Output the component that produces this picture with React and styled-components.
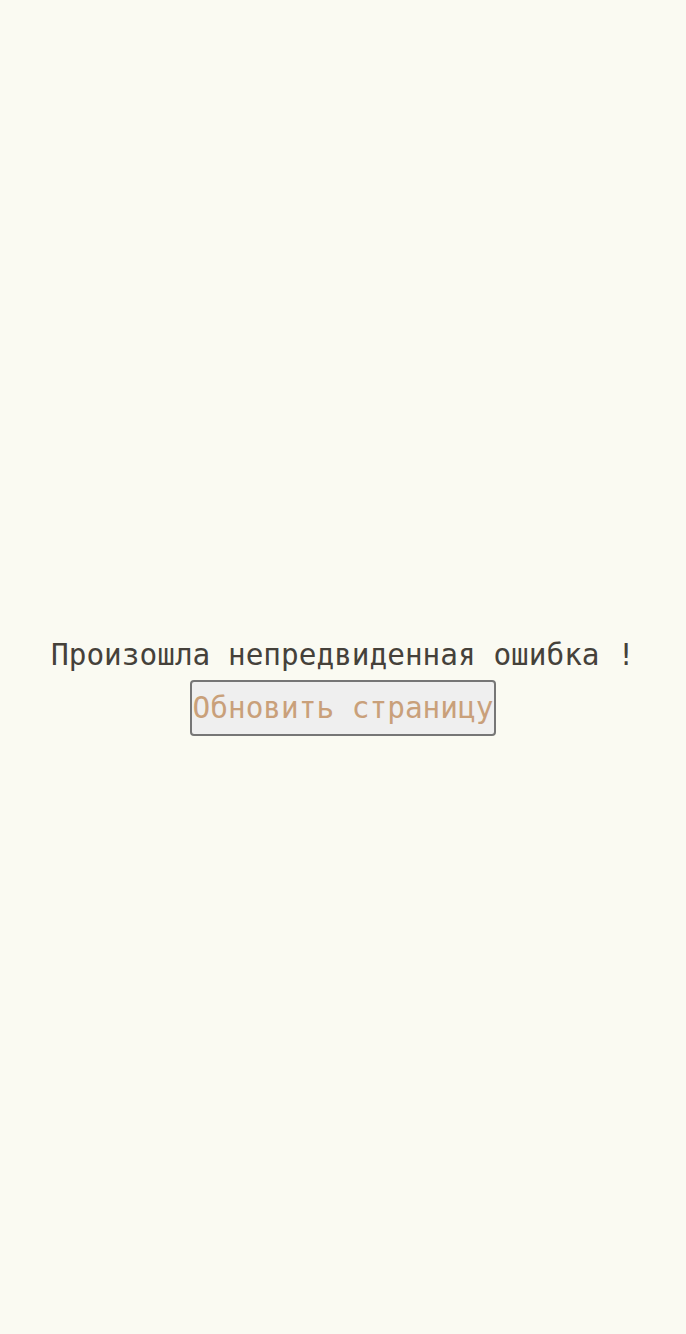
import React from "react";
import styled, { createGlobalStyle } from "styled-components";

const Global = createGlobalStyle`
  *, *::before, *::after { box-sizing: border-box; }
  html, body { margin: 0; padding: 0; background: #fafaf2; }
  body { font-family: "DejaVu Sans Mono", monospace; }
`;

const Page = styled.main`
  min-height: 100vh;
  padding-top: 40px;
  display: flex;
  flex-direction: column;
  align-items: center;
  justify-content: center;
  gap: 8px;
`;

const Message = styled.p`
  margin: 0;
  font-family: "DejaVu Sans Mono", monospace;
  font-size: 29.4px;
  color: #45413a;
  text-align: center;
`;

const ReloadButton = styled.button`
  font-family: "DejaVu Sans Mono", monospace;
  font-size: 29.4px;
  color: #c9a07a;
  background: #efefef;
  border: 2px solid #767676;
  border-radius: 4px;
  padding: 9px 1px;
  cursor: pointer;
`;

export default function App() {
  return (
    <>
      <Global />
      <Page>
        <Message>Произошла непредвиденная ошибка !</Message>
        <ReloadButton onClick={() => window.location.reload()}>Обновить страницу</ReloadButton>
      </Page>
    </>
  );
}
